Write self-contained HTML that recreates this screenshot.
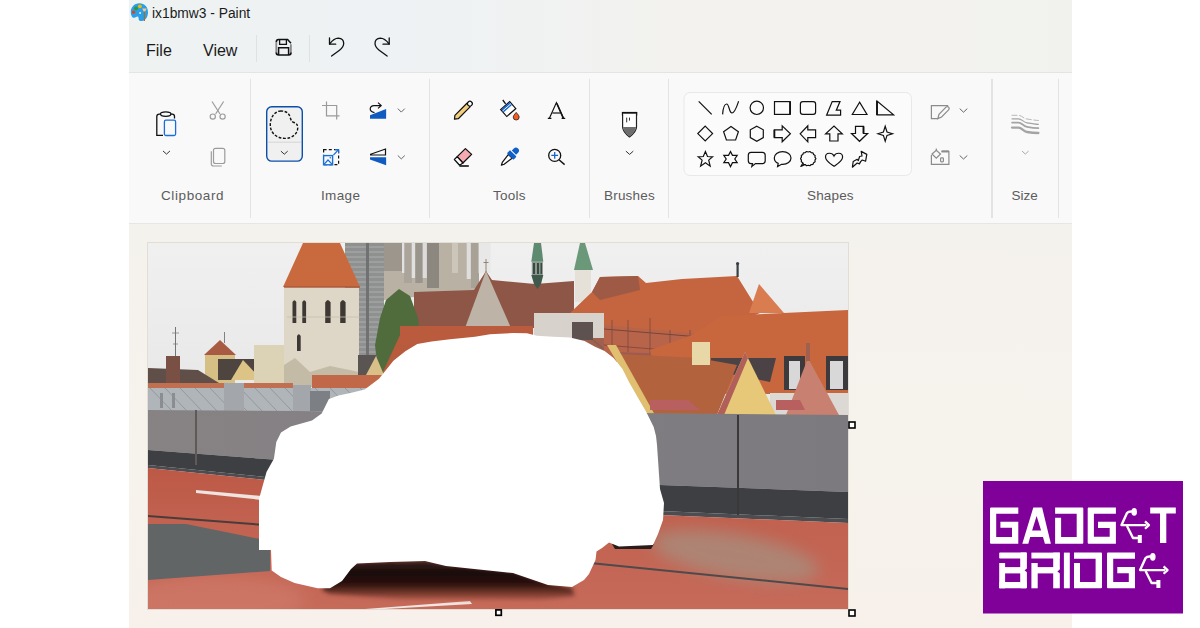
<!DOCTYPE html>
<html><head><meta charset="utf-8">
<style>
*{margin:0;padding:0;box-sizing:border-box}
html,body{width:1200px;height:628px;overflow:hidden;background:#fff;font-family:"Liberation Sans",sans-serif}
.a{position:absolute}
#app{position:absolute;left:129px;top:0;width:943px;height:628px;overflow:hidden}
#top{position:absolute;left:0;top:0;width:943px;height:73px;border-bottom:1px solid #e3e5e5;background:linear-gradient(90deg,#eef2f1 0%,#eef2f4 25%,#f0f2f2 42%,#f3f2ee 60%,#f3f2ee 85%,#f1f2ee 100%)}
#ribbon{position:absolute;left:0;top:73px;width:943px;height:151px;background:#f9f9f9;border-bottom:1px solid #e6e6e6}
#canvas{position:absolute;left:0;top:224px;width:943px;height:404px;background:linear-gradient(180deg,#f4f2ec 0%,#f5f2ed 15%,#f6f2ec 60%,#f8f1eb 100%)}
.sep{position:absolute;width:1px;background:#e3e3e3}
.lbl{position:absolute;font-size:13.5px;color:#5c5c5c;top:188px;white-space:nowrap}
.menu{position:absolute;font-size:16px;color:#1a1a1a;top:42px}
svg{position:absolute;overflow:visible}
</style></head><body>
<div id="app">
  <div id="top"></div>
  <div id="ribbon"></div>
  <div id="canvas"></div>
</div>
<!-- title -->
<div class="a" style="left:152px;top:6px;font-size:13.8px;color:#1b1b1b">ix1bmw3 - Paint</div>
<div class="menu" style="left:146px">File</div>
<div class="menu" style="left:203px">View</div>
<div class="sep" style="left:256px;top:35px;height:27px;background:#dfe1e3"></div>
<div class="sep" style="left:309px;top:35px;height:27px;background:#dfe1e3"></div>
<!-- ribbon separators -->
<div class="sep" style="left:250px;top:79px;height:139px"></div>
<div class="sep" style="left:429px;top:79px;height:139px"></div>
<div class="sep" style="left:589px;top:79px;height:139px"></div>
<div class="sep" style="left:668px;top:79px;height:139px"></div>
<div class="sep" style="left:991px;top:79px;height:139px;width:2px"></div>
<div class="sep" style="left:1058px;top:79px;height:139px"></div>
<!-- labels -->
<div class="lbl" style="left:161px;letter-spacing:0.6px">Clipboard</div>
<div class="lbl" style="left:321px;letter-spacing:0.35px">Image</div>
<div class="lbl" style="left:493px;letter-spacing:0.25px">Tools</div>
<div class="lbl" style="left:604px;letter-spacing:0.2px">Brushes</div>
<div class="lbl" style="left:807px;letter-spacing:0.15px">Shapes</div>
<div class="lbl" style="left:1011.5px">Size</div>
<!--ICONS-->
<svg class="a" style="left:0;top:0" width="1200" height="230" viewBox="0 0 1200 230">
<!-- paint app icon -->
<g>
<path d="M139.5,3.3 C134,3.3 130.8,7.5 130.8,12 C130.8,15.5 132.3,17.8 134,17.8 C135.5,17.8 136.2,16.5 137.5,16.5 C138.8,16.5 138.5,18.5 138.8,19.8 C139.2,21 140.5,21.2 142,21 C145.5,20.3 148,17 148,12.2 C148,7 144.5,3.3 139.5,3.3 Z" fill="#2a9ee8"/>
<circle cx="136" cy="8.4" r="1.9" fill="#2f9a2a"/>
<circle cx="139.9" cy="6.3" r="1.9" fill="#f5b800"/>
<circle cx="133.6" cy="12.2" r="1.6" fill="#e0401a"/>
<rect x="139.3" y="12.2" width="1.6" height="1.6" fill="#fff"/>
<rect x="143.8" y="11" width="1.2" height="10" fill="#b06a20"/>
<path d="M142.2,8.6 H146.8 L145.2,11.4 H143.6 Z" fill="#f0c890"/>
</g>
<!-- save -->
<g fill="none">
<path d="M276.3,41.8 V52.8" stroke="#8a8a8a" stroke-width="1.8"/>
<path d="M290.9,44.2 V52.8" stroke="#8a8a8a" stroke-width="1.8"/>
<path d="M276.3,42 Q276.3,39.6 278.6,39.6 H287.6 L291,43.2" stroke="#111" stroke-width="1.5"/>
<path d="M276.3,52.6 Q276.3,55 278.6,55 H288.6 Q291,55 291,52.6" stroke="#111" stroke-width="1.7"/>
<path d="M279.6,39.8 V44.3 H286.4 V39.8" stroke="#111" stroke-width="1.3"/>
<path d="M278.6,55 V47.8 H288.6 V55" stroke="#111" stroke-width="1.5"/>
</g>
<!-- undo redo -->
<g fill="none" stroke="#111" stroke-width="1.3" stroke-linecap="round" stroke-linejoin="round">
<path d="M329.5,38 V44.2 H335.7"/>
<path d="M329.6,44 Q334,38.2 338.3,38.2 Q343.7,38.6 343.7,43.5 Q343.5,47.2 339.5,50.2 L331.6,56"/>
<path d="M389.2,38 V44.2 H383"/>
<path d="M389.1,44 Q384.7,38.2 380.4,38.2 Q375,38.6 375,43.5 Q375.2,47.2 379.2,50.2 L387.1,56"/>
</g>
<!-- paste -->
<g fill="none" stroke-width="1.3">
<path d="M163,135.4 H156.8 V116.5 Q156.8,114.2 159.2,114.2 H172.3 Q174.5,114.2 174.5,116.5 V118.5" stroke="#111"/>
<ellipse cx="165.7" cy="114.1" rx="5.2" ry="2.2" fill="#f9f9f9" stroke="#111"/>
<rect x="164.4" y="120.2" width="11.2" height="15.3" rx="1.5" stroke="#1a6ed8" fill="#f9f9f9"/>
</g>
<!-- scissors -->
<g fill="none" stroke="#9c9c9c" stroke-width="1.2">
<path d="M212,101.5 L220,114"/><path d="M223.6,101.5 L215.6,114"/>
<circle cx="212.8" cy="116.6" r="2.6"/><circle cx="222.6" cy="116.6" r="2.6"/>
</g>
<!-- copy -->
<g fill="none" stroke="#9c9c9c" stroke-width="1.2">
<rect x="213.5" y="148.3" width="11.3" height="15.2" rx="2"/>
<path d="M211.3,151.2 V163.8 Q211.3,166 213.5,166 H221.8"/>
</g>
<!-- select button -->
<rect x="266.7" y="106.7" width="35.6" height="54.4" rx="5" fill="#f0f0f0" stroke="#0b4fab" stroke-width="1.4"/>
<path d="M268,142.2 H301" stroke="#d4d4d4" stroke-width="1"/>
<path d="M281,111 C275,111 270.3,117 270.3,125 C270.3,133 276.5,138.4 285,138.4 C292.5,138.4 297.7,133.5 297.7,128 C297.7,124.5 296.5,123.3 294,122.5 C291.5,121.7 291,120 290.2,117.5 C289.2,113.5 286.5,111 281,111 Z" fill="none" stroke="#111" stroke-width="1.4" stroke-dasharray="2.8 1.6"/>
<!-- chevrons -->
<g fill="none" stroke="#333" stroke-width="1" stroke-linecap="round">
<path d="M163.3,151.2 L166.5,154.1 L169.7,151.2"/>
<path d="M281.2,151.4 L284.3,154.2 L287.4,151.4"/>
<path d="M626.2,151.4 L629.6,154.4 L633,151.4"/>
</g>
<g fill="none" stroke="#666" stroke-width="1" stroke-linecap="round">
<path d="M398.1,108.9 L401.3,112.1 L404.5,108.9"/>
<path d="M398.1,155.8 L401.3,158.9 L404.5,155.8"/>
<path d="M960,108.9 L963.5,112.2 L967,108.9"/>
<path d="M960,155.8 L963.5,159 L967,155.8"/>
</g>
<path d="M1022,151 L1025.3,154.1 L1028.6,151" fill="none" stroke="#aaa" stroke-width="1"/>
<!-- crop -->
<g fill="none" stroke="#9a9a9a" stroke-width="1.2">
<path d="M326.5,101.5 V115.8 H339.5"/>
<path d="M322,105.5 H336.7 V119.5"/>
</g>
<!-- resize -->
<g>
<rect x="323.6" y="149.7" width="15" height="15" fill="none" stroke="#111" stroke-width="1.2" stroke-dasharray="3 2.2"/>
<rect x="323.6" y="155.6" width="9" height="9.2" fill="#f9f9f9" stroke="#1a6ed8" stroke-width="1.4"/>
<path d="M324.2,164.2 L328,160 L332,164.2" fill="none" stroke="#1a6ed8" stroke-width="1.2"/>
<circle cx="330.3" cy="157.8" r="0.8" fill="#1a6ed8"/>
<path d="M333.5,155 L338.6,149.7 M335,149.7 H338.6 V153.3" fill="none" stroke="#1a6ed8" stroke-width="1.2"/>
</g>
<!-- rotate -->
<polygon points="370,115.3 386.1,108.9 386.1,118.8 370,118.8" fill="#0f5bbf"/>
<path d="M374.5,112.6 Q370,111.6 370.2,108.8 Q370.5,105.7 374,105.6 H381.2 M378,102.6 L381.3,105.6 L378,108.4" fill="none" stroke="#111" stroke-width="1.2" stroke-linejoin="round"/>
<!-- flip -->
<polygon points="370.6,154.2 385.5,149 385.5,155 370.6,155" fill="none" stroke="#111" stroke-width="1.2" stroke-linejoin="miter"/>
<polygon points="370,157.2 386.1,157.2 386.1,165.2 370,159.4" fill="#0f5bbf"/>
<!-- pencil -->
<g transform="translate(463.1,110.5) rotate(-45)">
<path d="M-12.2,0 L-9.2,-2.4 H7.8 V2.4 H-9.2 Z" fill="#f2ce7e" stroke="#111" stroke-width="1.2" stroke-linejoin="round"/>
<circle cx="9.6" cy="0" r="2.4" fill="#fff" stroke="#111" stroke-width="1.2"/>
</g>
<!-- fill bucket -->
<g transform="translate(508.2,109) rotate(-41)">
<rect x="-6" y="-4.6" width="12" height="9.3" fill="#fff" stroke="#111" stroke-width="1.2"/>
<rect x="-5.4" y="-4.1" width="10.8" height="3.6" fill="#1064d0"/>
<path d="M-5.4,-2.2 H5.4" stroke="#fff" stroke-width="0.9"/>
</g>
<path d="M505.6,103.8 L502.8,100" stroke="#111" stroke-width="1.3"/>
<path d="M516.2,112.4 Q519.2,115.6 519.2,117 A3,3 0 0 1 513.2,117 Q513.2,115.6 516.2,112.4 Z" fill="#f55a1e" stroke="#222" stroke-width="0.8"/>
<!-- text A -->
<g fill="none" stroke="#111" stroke-width="1.2">
<path d="M549.4,118.3 L556.4,102.6 L563.5,118.3"/><path d="M556.9,103.5 L563.2,118" stroke-width="1.6"/>
<path d="M552.4,113 H560.6"/>
<path d="M547.8,118.4 H551.4 M561.6,118.4 H565.2"/>
</g>
<!-- eraser -->
<polygon points="465.4,148.6 471.6,154.4 462.9,163 457.2,156.6" fill="#f4aab0" stroke="#111" stroke-width="1.3" stroke-linejoin="round"/>
<polygon points="457.2,156.6 462.9,163 459.6,165.2 454.4,159.5" fill="#fff" stroke="#111" stroke-width="1.3" stroke-linejoin="round"/>
<path d="M459.4,166 H468.8" stroke="#111" stroke-width="1.6"/>
<!-- eyedropper -->
<g transform="translate(511.7,154.9) rotate(-45)">
<path d="M-14.6,0 L-12,-1.3 L-2,-2.6 V2.6 L-12,1.3 Z" fill="#fff" stroke="#111" stroke-width="1.2" stroke-linejoin="round"/>
<rect x="-2.2" y="-4.6" width="4.4" height="9.2" rx="0.8" fill="#0f60c8"/>
<path d="M3.2,-3 H6 A3,3 0 0 1 6,3 H3.2 Z" fill="#0f60c8"/>
</g>
<!-- magnifier -->
<circle cx="554.7" cy="155.4" r="6" fill="none" stroke="#111" stroke-width="1.3"/>
<path d="M559,159.8 L564.6,164.6" stroke="#111" stroke-width="1.4"/>
<path d="M554.7,152 V158.8 M551.3,155.4 H558.1" stroke="#1a64c8" stroke-width="1.3"/>
<!-- brush -->
<g>
<path d="M622.6,114.2 V127 Q622.6,131.5 629.5,137 Q636.5,131.5 636.5,127 V114.2" fill="#fff" stroke="#222" stroke-width="1.2" stroke-linejoin="round"/>
<path d="M623,127 H636 Q636,131 629.5,136.4 Q623,131 623,127 Z" fill="#6e6e6e"/>
<path d="M622,112.8 H637.1" stroke="#111" stroke-width="1.8"/>
<path d="M622.4,112 V115.5 M636.7,112 V115.5" stroke="#111" stroke-width="1.1"/>
<path d="M626.7,117.6 V122.4 M629.5,117.6 V120.6" stroke="#333" stroke-width="1"/>
</g>
<!-- shapes box -->
<rect x="684" y="92.5" width="227.5" height="83" rx="6" fill="#fbfbfb" stroke="#e8e8e8" stroke-width="1"/>
<g fill="none" stroke="#111" stroke-width="1.2" stroke-linejoin="miter">
<!-- row1 -->
<path d="M698.7,101.3 L711.7,114.3"/>
<path d="M722.6,114.4 C723,109 724.5,104 726.7,104 C729.3,104 729,113 732,113 C734.8,113 737,106 738.6,101.3"/>
<circle cx="756.8" cy="107.8" r="6.7"/>
<rect x="774.5" y="101.6" width="15.6" height="12.8"/>
<path d="M790.1,101.6 V114.4" stroke-width="1.8"/>
<rect x="800.4" y="101.6" width="15.2" height="12.8" rx="2.4"/>
<polygon points="832.2,101.6 840,101.6 836.3,110.2 840.6,110.2 840.6,115.2 826.6,115.2"/>
<polygon points="859.6,102.2 852.3,114.5 867,114.5"/>
<polygon points="877,101 877,114.9 893.6,114.9"/>
<path d="M877,101 V115" stroke-width="1.8"/>
<!-- row2 -->
<polygon points="705.2,126.2 712.6,133.6 705.2,141 697.8,133.6"/>
<polygon points="731,126.4 738.4,131.7 735.6,140 726.4,140 723.6,131.7"/>
<polygon points="756.8,126.2 763.3,129.8 763.3,137.6 756.8,141.2 750.3,137.6 750.3,129.8"/>
<polygon points="774.4,129.8 782.2,129.8 782.2,125.8 790.4,133.7 782.2,141.8 782.2,137.6 774.4,137.6"/>
<path d="M774.4,129.8 V137.6" stroke-width="1.8"/>
<polygon points="815.6,129.8 807.8,129.8 807.8,125.8 800.2,133.8 807.8,141.8 807.8,137.6 815.6,137.6"/>
<polygon points="829.8,141 829.8,133.8 825.6,133.8 834,126 842.3,133.8 838,133.8 838,141"/>
<polygon points="855.5,126.4 863.5,126.4 863.5,133.5 867.6,133.5 859.5,141.3 851.5,133.5 855.5,133.5"/>
<path d="M863.5,126.4 V133.5" stroke-width="1.8"/>
<polygon points="885.2,126.2 887,132 892.5,133.7 887,135.4 885.2,141.2 883.4,135.4 878,133.7 883.4,132"/>
<!-- row3 -->
<polygon points="705.4,151.6 707.5,156.5 712.6,156.8 708.7,160.1 710.2,166.2 705.4,162.8 700.6,166.2 702.1,160.1 698.2,156.8 703.3,156.5"/>
<polygon points="730.5,151.6 732.5,155.4 737.2,155.4 734.8,159 737.2,162.7 732.5,162.7 730.5,166.6 728.5,162.7 723.8,162.7 726.2,159 723.8,155.4 728.5,155.4"/>
<path d="M751,152.4 H762.3 Q765.2,152.4 765.2,155.3 V160.8 Q765.2,163.6 762.3,163.6 H755.5 L751.8,166.5 L752.5,163.6 H751 Q748.3,163.6 748.3,160.8 V155.3 Q748.3,152.4 751,152.4 Z"/>
<path d="M782.6,151.6 C777.8,151.6 774.3,154.4 774.3,158 C774.3,160.6 775.8,162.4 778.2,163.4 L777.6,166.5 L781.5,164.3 C782,164.4 782.3,164.4 782.6,164.4 C787.4,164.4 791,161.6 791,158 C791,154.4 787.4,151.6 782.6,151.6 Z"/>
<path d="M815.87,158.60 L814.96,160.07 L815.11,161.77 L813.62,162.72 L812.98,164.31 L811.21,164.55 L809.91,165.72 L808.20,165.20 L806.49,165.72 L805.19,164.55 L803.42,164.31 L802.78,162.72 L801.29,161.77 L801.44,160.07 L800.54,158.60 L801.44,157.13 L801.29,155.43 L802.78,154.48 L803.42,152.89 L805.19,152.65 L806.49,151.48 L808.20,152.00 L809.91,151.48 L811.21,152.65 L812.98,152.89 L813.62,154.48 L815.11,155.43 L814.96,157.13 Z" stroke-linejoin="round"/><path d="M802.8,163.2 L800.8,166.5 L804.6,164.6" stroke-linejoin="round"/>
<path d="M834,156 C832.5,152.5 825.5,151.8 825.5,157 C825.5,161 830,163.5 834,166.3 C838,163.5 842.6,161 842.6,157 C842.6,151.8 835.5,152.5 834,156 Z"/>
<polygon points="861.2,151.4 866.8,154.4 865.6,161.2 862.3,160 860.6,161.6 859.4,163.9 857.2,163 852.4,167.2 853.2,161.5 857.2,159.3 858.3,160.6 859.6,156.5 862,156 861.2,151.4" stroke-linejoin="round"/>
</g>
<!-- outline -->
<g fill="none" stroke="#8c8c8c" stroke-width="1.2">
<path d="M937.8,118.6 H931.4 V105.6 H948.2"/>
<path d="M937.8,118.6 L939,114.4 L946,107.2 A1.8,1.8 0 0 1 948.6,109.8 L941.6,117 Z"/>
</g>
<!-- fill -->
<g fill="none" stroke="#8c8c8c" stroke-width="1.2">
<path d="M931.4,155 V164.4 H948.9 V151.6 H941.5"/>
<path d="M941.5,151.3 H948.9" stroke-width="2"/>
<path d="M932,154 L936.3,150.2 L940.5,154 L936.3,158.2 Z"/>
<path d="M936.3,150.2 V148.5"/>
<rect x="940.6" y="157.8" width="2.8" height="4" rx="0.8"/>
</g>
<!-- size -->
<g fill="none" stroke="#a4a4a4" stroke-linecap="round">
<path d="M1012,115.3 H1018.5 C1022,115.3 1023,118.5 1027,119 C1031,119.6 1035,120.3 1038.4,120.5" stroke-width="0.9" stroke-dasharray="5 2.5" stroke="#b0b0b0"/>
<path d="M1012,118.8 H1018.5 C1022,118.8 1023,122.2 1027,122.8 C1031,123.5 1035,124.2 1038.4,124.3" stroke-width="1.2"/>
<path d="M1012,122.6 H1018.5 C1022,122.6 1023,126.2 1027,126.8 C1031,127.5 1035,128 1038.4,128.2" stroke-width="1.7"/>
<path d="M1012,127.6 H1018.5 C1022,127.6 1023,131.3 1027,132 C1031,132.7 1035,133 1038.4,133" stroke-width="2.3"/>
</g>
</svg>

<!--/ICONS-->
<!--PHOTO-->
<svg class="a" style="left:0;top:0" width="1200" height="628" viewBox="0 0 1200 628">
<defs>
<clipPath id="pc"><rect x="148" y="243" width="700" height="366"/></clipPath>
<linearGradient id="sky" x1="0" y1="0" x2="0" y2="1">
<stop offset="0" stop-color="#f0f0f0"/><stop offset="0.35" stop-color="#e9e9ea"/><stop offset="1" stop-color="#e4e4e5"/>
</linearGradient>
<linearGradient id="floor" x1="0" y1="0" x2="0" y2="1">
<stop offset="0" stop-color="#bc5846"/><stop offset="0.4" stop-color="#c26250"/><stop offset="1" stop-color="#c66a5a"/>
</linearGradient>
<linearGradient id="shadow" x1="0" y1="0" x2="0" y2="1">
<stop offset="0" stop-color="#3a2420"/><stop offset="0.3" stop-color="#1a0c0a"/><stop offset="0.6" stop-color="#2a100c"/><stop offset="0.85" stop-color="#7a3c30"/><stop offset="1" stop-color="#b25a48"/>
</linearGradient>
<filter id="blur6" x="-50%" y="-50%" width="200%" height="200%"><feGaussianBlur stdDeviation="8"/></filter>
<linearGradient id="wallg" x1="0" y1="0" x2="1" y2="0"><stop offset="0" stop-color="#878385"/><stop offset="1" stop-color="#7c7a7f"/></linearGradient>
<filter id="blur2" x="-10%" y="-50%" width="120%" height="200%"><feGaussianBlur stdDeviation="2"/></filter>
</defs>
<g clip-path="url(#pc)">
<rect x="148" y="243" width="700" height="366" fill="url(#sky)"/>
<!-- cathedral -->
<polygon points="384,243 479,243 479,290 466,292 384,300" fill="#b9b1a3"/>
<rect x="384" y="243" width="18" height="28" fill="#9c968c"/>
<rect x="404" y="243" width="8" height="40" fill="#aaa49a"/>
<rect x="402" y="243" width="2.3" height="30" fill="#e2e2e2"/>
<rect x="411.7" y="243" width="3.6" height="35" fill="#e0e0e0"/>
<rect x="415.3" y="243" width="7.4" height="40" fill="#9a958c"/>
<rect x="422.7" y="243" width="4.1" height="35" fill="#dcdcdc"/>
<rect x="427" y="243" width="12" height="45" fill="#8c8880"/>
<rect x="452" y="243" width="6" height="30" fill="#ccc6ba"/>
<rect x="466.7" y="243" width="4.1" height="36" fill="#dedede"/>
<rect x="471" y="243" width="8" height="45" fill="#a8a296"/>
<rect x="478.6" y="243" width="12" height="30" fill="#e8e8e8"/>
<!-- scaffolding -->
<rect x="345" y="243" width="39" height="113" fill="#8f9191"/>
<path d="M345,247 H384" stroke="#b4b6b6" stroke-width="0.8"/><path d="M345,252 H384" stroke="#b4b6b6" stroke-width="0.8"/><path d="M345,257 H384" stroke="#b4b6b6" stroke-width="0.8"/><path d="M345,262 H384" stroke="#b4b6b6" stroke-width="0.8"/><path d="M345,267 H384" stroke="#b4b6b6" stroke-width="0.8"/><path d="M345,272 H384" stroke="#b4b6b6" stroke-width="0.8"/><path d="M345,277 H384" stroke="#b4b6b6" stroke-width="0.8"/><path d="M345,282 H384" stroke="#b4b6b6" stroke-width="0.8"/><path d="M345,287 H384" stroke="#b4b6b6" stroke-width="0.8"/><path d="M345,292 H384" stroke="#b4b6b6" stroke-width="0.8"/><path d="M345,297 H384" stroke="#b4b6b6" stroke-width="0.8"/><path d="M345,302 H384" stroke="#b4b6b6" stroke-width="0.8"/><path d="M345,307 H384" stroke="#b4b6b6" stroke-width="0.8"/><path d="M345,312 H384" stroke="#b4b6b6" stroke-width="0.8"/><path d="M345,317 H384" stroke="#b4b6b6" stroke-width="0.8"/><path d="M345,322 H384" stroke="#b4b6b6" stroke-width="0.8"/><path d="M345,327 H384" stroke="#b4b6b6" stroke-width="0.8"/><path d="M345,332 H384" stroke="#b4b6b6" stroke-width="0.8"/><path d="M345,337 H384" stroke="#b4b6b6" stroke-width="0.8"/><path d="M345,342 H384" stroke="#b4b6b6" stroke-width="0.8"/><path d="M345,347 H384" stroke="#b4b6b6" stroke-width="0.8"/><path d="M345,352 H384" stroke="#b4b6b6" stroke-width="0.8"/><rect x="366" y="243" width="3" height="113" fill="#6f7172"/>
<!-- brown roof behind gable -->
<polygon points="414,292 474,290 486,271 492,280 535,284 574,281 574,328 414,328" fill="#8e5646"/>
<polygon points="486,271 465,328 511,328" fill="#bdb3a6"/>
<!-- spires -->
<polygon points="534,243 541,243 543.3,261.7 531.3,261.7" fill="#5e8a70"/>
<rect x="531.8" y="261.7" width="11" height="13.5" fill="#8a9a90"/>
<rect x="533" y="263" width="2" height="11" fill="#3a4a42"/><rect x="537" y="263" width="2" height="11" fill="#3a4a42"/><rect x="540.5" y="263" width="1.6" height="11" fill="#3a4a42"/>
<polygon points="531.3,275 543.3,275 541,284 537.5,289 534,284" fill="#3f5a4c"/>
<path d="M486,259 V272 M483.5,262.5 H488.5" stroke="#8a7a68" stroke-width="0.9"/>
<polygon points="580,243 585,243 593,270 574,270" fill="#6b9878"/>
<rect x="575" y="270" width="16" height="32" fill="#e6e1d8"/>
<!-- big orange roof -->
<polygon points="570,313 592,292 600,277 638,276 646,283 682,279 737,276 760,313 700,337 570,337" fill="#c4653f"/>
<polygon points="592,292 600,277 638,276 640,290 600,300" fill="#9e5a44"/>
<rect x="736.5" y="263" width="2.2" height="14" fill="#3a4040"/>
<circle cx="737.6" cy="263.5" r="1.6" fill="#3a4040"/>
<polygon points="749,313 759,284 784,313" fill="#d97c50"/>
<!-- tree -->
<polygon points="386,300 399,289 410,296 418,318 421,345 410,360 392,374 378,372 375,345 380,318" fill="#506c3c"/>
<!-- white structures -->
<polygon points="534,313 604,313 604,340 534,340" fill="#d8d2cc"/>
<polygon points="580,338 604,338 615,350 615,362 585,362" fill="#a0604e"/>
<rect x="572" y="322" width="21" height="18" fill="#5e5250"/>
<path d="M593,340 L612,356" stroke="#8a5a50" stroke-width="1.5"/>
<!-- railing -->
<polygon points="604,325 700,334 720,345 720,362 604,362" fill="#b8644a"/>
<path d="M604,329 L700,337" stroke="#7a4438" stroke-width="1"/>
<path d="M604,345 L690,352" stroke="#8a4a3c" stroke-width="1"/>
<path d="M612,320 V350 M628,320 V352 M650,318 V354 M670,330 V355 M690,330 V356" stroke="#7a4a40" stroke-width="0.8"/>
<polygon points="615,352 700,355 715,362 620,362" fill="#9c5a50"/>
<!-- orange strip mid -->
<polygon points="382,374 400,335 420,330 440,330 440,380 382,380" fill="#b85a3c"/>
<polygon points="400,326 533,326 533,345 400,345" fill="#b95b3c"/>
<!-- tower roof -->
<polygon points="303,243 340,243 360,287 283,287" fill="#c96a3e"/>
<path d="M284,287 H360" stroke="#a85a38" stroke-width="1.5"/>
<!-- tower body -->
<rect x="284" y="288" width="75" height="99" fill="#ded6c6"/>
<path d="M292.5,323 V302 Q294.4,298.5 296.3,302 V323 Z" fill="#3d3833"/>
<path d="M302.3,323 V302 Q304.2,298.5 306.1,302 V323 Z" fill="#3d3833"/>
<path d="M325.2,323 V302.5 Q327.9,297.5 330.6,302.5 V323 Z" fill="#3d3833"/>
<path d="M340.2,323 V302.5 Q342.9,297.5 345.6,302.5 V323 Z" fill="#3d3833"/>
<path d="M287,317 H359" stroke="#c8bfae" stroke-width="0.8"/>
<path d="M297,351 V336 Q298.8,332.5 300.7,336 V351 Z" fill="#3d3833"/>
<polygon points="284,365 295,358 310,372 330,366 359,372 359,387 284,387" fill="#c4bba6"/>
<!-- left small buildings -->
<path d="M175.5,327 V357" stroke="#666" stroke-width="0.9"/><path d="M172,333 H179 M173,344 H178" stroke="#777" stroke-width="0.7"/><path d="M224.5,332 V343" stroke="#666" stroke-width="0.8"/>
<rect x="205" y="354" width="30" height="30" fill="#d6bf84"/>
<polygon points="204,355 220,340 236,355" fill="#a95a42"/>
<polygon points="218,359 265,359 276,380 218,380" fill="#4f4540"/>
<polygon points="231,380 243,360 262,380" fill="#dcc486"/>
<rect x="254" y="345" width="30" height="38" fill="#dcd3b6"/>
<polygon points="148,368 198,370 219,383 148,384" fill="#5f4f48"/>
<rect x="166" y="356" width="14" height="28" fill="#7a5045"/>
<polygon points="312,375 385,375 385,388 312,388" fill="#c06848"/>
<polygon points="358,355 376,355 382,375 358,375" fill="#5a5552"/>
<polygon points="366,375 376,356 384,375" fill="#d8c088"/>
<polygon points="148,383 293,383 293,389 148,389" fill="#c07050"/>
<!-- right roof -->
<polygon points="692,335 720,316 848,310 848,394 660,394 650,350" fill="#c8663d"/>
<rect x="770" y="393" width="78" height="22" fill="#dcd8d4"/>
<rect x="784" y="356" width="21" height="34" fill="#3c3a3c"/>
<rect x="789" y="361" width="11" height="28" fill="#d8d8d8"/>
<rect x="826" y="356" width="22" height="34" fill="#3c3a3c"/>
<rect x="830" y="361" width="13" height="28" fill="#d8d8d8"/>
<polygon points="711,358 776,358 770,382 711,370" fill="#4a4244"/>
<!-- lower roofs -->
<polygon points="620,354 698,358 737,365 717,415 648,415" fill="#b3623e"/>
<polygon points="607,345 616,345 655,415 648,415" fill="#e0c070"/>
<rect x="692" y="342" width="18" height="23" fill="#e8d8a8"/>
<polygon points="745,352 717,415 776,415" fill="#e7c778"/>
<polygon points="745,352 717,415 724,415 748,358" fill="#b06058"/>
<polygon points="808,358 786,415 839,415" fill="#c88070"/>
<rect x="806" y="343" width="4" height="18" fill="#a06050"/>
<polygon points="650,400 688,400 700,410 650,410" fill="#b86060"/>
<polygon points="776,400 800,400 805,410 776,410" fill="#b86060"/>
<!-- metal roof left -->
<polygon points="148,388 385,388 385,411 148,411" fill="#b0b5ba"/>
<path d="M150,388 L172,411" stroke="#8f959a" stroke-width="0.9"/><path d="M165,388 L187,411" stroke="#8f959a" stroke-width="0.9"/><path d="M180,388 L202,411" stroke="#8f959a" stroke-width="0.9"/><path d="M195,388 L217,411" stroke="#8f959a" stroke-width="0.9"/><path d="M210,388 L232,411" stroke="#8f959a" stroke-width="0.9"/><path d="M225,388 L247,411" stroke="#8f959a" stroke-width="0.9"/><path d="M240,388 L262,411" stroke="#8f959a" stroke-width="0.9"/><path d="M255,388 L277,411" stroke="#8f959a" stroke-width="0.9"/><path d="M270,388 L292,411" stroke="#8f959a" stroke-width="0.9"/><path d="M285,388 L307,411" stroke="#8f959a" stroke-width="0.9"/><path d="M300,388 L322,411" stroke="#8f959a" stroke-width="0.9"/><path d="M315,388 L337,411" stroke="#8f959a" stroke-width="0.9"/><path d="M330,388 L352,411" stroke="#8f959a" stroke-width="0.9"/><path d="M345,388 L367,411" stroke="#8f959a" stroke-width="0.9"/><path d="M360,388 L382,411" stroke="#8f959a" stroke-width="0.9"/><path d="M375,388 L397,411" stroke="#8f959a" stroke-width="0.9"/>
<rect x="224" y="383" width="20" height="28" fill="#a3a7ab"/>
<rect x="293" y="385" width="18" height="26" fill="#a3a7ab"/>
<rect x="310" y="391" width="20" height="20" fill="#7c8084"/>

<rect x="160" y="393" width="3" height="15" fill="#8a8e92"/>
<rect x="172" y="393" width="3" height="15" fill="#8a8e92"/>
<!-- wall -->
<polygon points="148,410 640,413 848,415 848,492 660,485 265,459 148,450" fill="url(#wallg)"/>
<polygon points="148,450 265,459 660,485 848,492 848,519 660,511 265,477 148,465" fill="#3e3f42"/>
<polygon points="148,465 265,477 660,511 848,519 848,523 660,515 265,480 148,468" fill="#4c4d51"/>
<rect x="195" y="410" width="2" height="55" fill="#5f5a58"/>
<rect x="737" y="415" width="2" height="100" fill="#3a3839"/>
<!-- floor -->
<polygon points="148,468 265,480 660,515 848,523 848,609 148,609" fill="url(#floor)"/>
<ellipse cx="735" cy="556" rx="85" ry="22" fill="#a49282" opacity="0.7" filter="url(#blur6)" transform="rotate(10 735 556)"/>
<ellipse cx="215" cy="600" rx="90" ry="25" fill="#d88878" opacity="0.4" filter="url(#blur6)"/>
<polygon points="148,524 186,524 270,541 270,571 148,580" fill="#616566"/>
<polygon points="196,490 262,496 262,500 196,493" fill="#f0e4e0"/>
<polygon points="148,515 265,524 265,526 148,517" fill="#4a3c3a"/>
<polygon points="590,562 848,588 848,590 590,564" fill="#4e4a4c"/>
<polygon points="365,609 470,601 472,604 385,609" fill="#f2e6e2"/>
<!-- car shadow -->
<polygon points="335,566 356,562 425,560 446,564 513,571 548,583 572,588 575,596 540,600 400,599 330,594 322,590" fill="url(#shadow)" filter="url(#blur2)"/>
<polygon points="612,544 654,544 651,549 615,549" fill="#2a1c1a"/>
<!-- car -->
<polygon fill="#fff" points="312,420.6 321.7,413.4 328.9,399 338.4,395.5 350.4,393.1 364.7,389.5 379,378.8 393.4,360.8 405.3,351.3 417.3,344.1 431.6,341.5 450,339.2 475,336.7 490,334.2 513,333 527,333.3 537,335.8 553,336.7 570,337.5 584.6,341 595,346.7 604.6,351 613.6,358 622.5,369 629.2,382.4 638,398 647,413.6 653.7,427 656,436 657,445 660,489 664,503 663,520 658,534 653,545 619,546.5 609,542.5 602,548 596.5,551.5 595.5,560 589,574 584,580 572,587 548,585 513,573 446,566 425,561 390,562 357,563.5 351,569 342,581 330,588.3 317.6,588.3 294.6,583 281,577 271.7,570.6 271,550 259,550 259,499 266.5,472 273.9,458.8 276.3,442 281,432.5 290.6,426.6"/>
</g>
<rect x="147.5" y="242.5" width="701" height="367" fill="none" stroke="#e3ded5" stroke-width="1"/>
<!-- handles -->
<rect x="849" y="422" width="6" height="6" fill="#fff" stroke="#000" stroke-width="1.6"/>
<rect x="849" y="610" width="6" height="6" fill="#fff" stroke="#000" stroke-width="1.6"/>
<rect x="495.9" y="609.9" width="5.4" height="5.4" fill="#fff" stroke="#000" stroke-width="1.7"/>
</svg>

<!--/PHOTO-->
<!--LOGO-->
<svg class="a" style="left:983px;top:481px" width="200" height="133" viewBox="983 481 200 133">
<rect x="983" y="481" width="200" height="132.5" fill="#80009a"/>
<g fill="#fff">
<!-- line1 -->
<path transform="translate(990,507.5)" d="M0,1 Q0,0 1,0 H28.3 V6.2 H6.2 V29.6 H22 V20.3 H10.4 V14.3 H28.3 V36.2 H1 Q0,36.2 0,35.2 Z"/>
<path transform="translate(1022.3,507.5)" fill-rule="evenodd" d="M0,36.2 L11,0 H19.8 L28.6,36.2 H22.6 L20.7,29.6 H7.9 L6,36.2 Z M9.8,23 H18.8 L14.3,8.6 Z"/>
<path transform="translate(1055.1,507.5)" d="M0,0 H27.2 Q28.2,0 28.2,1 V35.2 Q28.2,36.2 27.2,36.2 H0 V10.2 H6 V29.6 H21.6 V6.3 H0 Z"/>
<path transform="translate(1087.7,507.5)" d="M0,1 Q0,0 1,0 H28.2 V6.2 H6.2 V29.3 H22 V20.5 H10.3 V14.3 H28.2 V36.2 H1 Q0,36.2 0,35.2 Z"/>
<path transform="translate(1150.2,507.5)" d="M0,0 H25.6 V5.9 H16.1 V35.5 H9.8 V5.9 H0 Z"/>
<!-- line2 -->
<g transform="translate(999.2,552.6)"><rect x="0" y="0" width="27.7" height="5.9" rx="0.8"/><rect x="0" y="10.4" width="5.9" height="25.3"/><rect x="5" y="14.5" width="22" height="6.3"/><rect x="0" y="29.4" width="27.7" height="6.3" rx="0.8"/><rect x="21" y="0" width="6.7" height="35.7" rx="1"/><polygon points="28,15.6 25.4,17.7 28,19.8" fill="#80009a"/></g>
<g transform="translate(1031.4,552.6)"><rect x="0" y="0" width="28.4" height="5.9"/><rect x="0" y="10.4" width="6.3" height="25.3"/><rect x="5" y="14.5" width="23" height="6.3"/><rect x="21.8" y="0" width="6.6" height="35.7"/><polygon points="28.6,16.6 26,18.8 28.6,21" fill="#80009a"/></g>
<rect x="1063.9" y="552.6" width="5.9" height="35.7"/>
<path transform="translate(1074,552.6)" d="M0,0 H27 Q28,0 28,1 V34.7 Q28,35.7 27,35.7 H0 V10.4 H6 V29.4 H21.6 V6.1 H0 Z"/>
<path transform="translate(1107,552.6)" d="M0,1 Q0,0 1,0 H28 V6.1 H6.2 V29.4 H21.8 V20.6 H10.3 V14.3 H28 V35.7 H1 Q0,35.7 0,34.7 Z"/>
</g>
<g id="usb" fill="none" stroke="#fff" stroke-width="2.4" stroke-linejoin="round">
<path d="M1146.5,525.1 H1121.5 L1127,513 Q1128.5,511.2 1132,511.5"/>
<path d="M1127,526 L1133,538 H1139"/>
<path d="M1145,521.4 L1149,525.1 L1145,528.8" stroke-width="2.2"/>
</g>
<g fill="#fff">
<ellipse cx="1134.2" cy="511.8" rx="2.8" ry="3.9"/>
<rect x="1137.8" y="535" width="4" height="8"/>
</g>
<g transform="translate(18.6,45)">
<g fill="none" stroke="#fff" stroke-width="2.4" stroke-linejoin="round">
<path d="M1146.5,525.1 H1121.5 L1127,513 Q1128.5,511.2 1132,511.5"/>
<path d="M1127,526 L1133,538 H1139"/>
<path d="M1145,521.4 L1149,525.1 L1145,528.8" stroke-width="2.2"/>
</g>
<g fill="#fff">
<ellipse cx="1134.2" cy="511.8" rx="2.8" ry="3.9"/>
<rect x="1137.8" y="535" width="4" height="8"/>
</g>
</g>
</svg>

<!--/LOGO-->
</body></html>
